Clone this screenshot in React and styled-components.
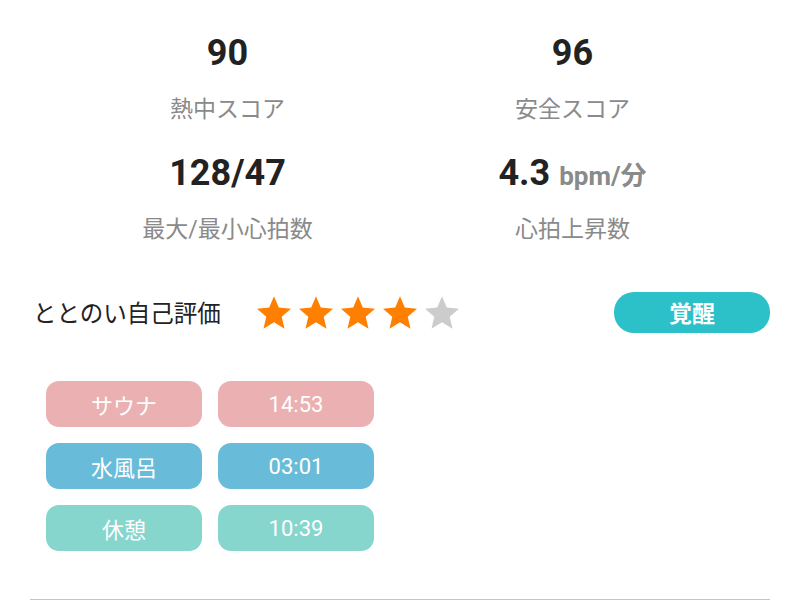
import React from 'react';
import styled, { createGlobalStyle } from 'styled-components';

const GlobalStyle = createGlobalStyle`
  body {
    margin: 0;
    background: #fff;
    font-family: Roboto, "Noto Sans CJK JP", sans-serif;
  }
`;

const Page = styled.div`
  padding: 33px 30px 0;
`;

const StatsGrid = styled.div`
  display: grid;
  grid-template-columns: 1fr 1fr;
  padding: 0 25px;
  row-gap: 27px;
`;

const Stat = styled.div`
  display: flex;
  flex-direction: column;
  align-items: center;
`;

const Value = styled.div`
  height: 40px;
  font-size: 36px;
  font-weight: 700;
  line-height: 40px;
  color: #222;
  white-space: nowrap;
`;

const Unit = styled.span`
  font-size: 26px;
  color: #8a8a8a;
  margin-left: 9px;
`;

const Label = styled.div`
  height: 32px;
  margin-top: 21px;
  font-size: 23px;
  line-height: 32px;
  color: #8a8a8a;
`;

const RatingRow = styled.div`
  display: flex;
  align-items: center;
  height: 42px;
  margin-top: 45px;
  padding-left: 3px;
`;

const RatingText = styled.div`
  font-size: 23.5px;
  color: #222;
`;

const Stars = styled.div`
  display: flex;
  gap: 8px;
  margin-left: 36px;
`;

const Badge = styled.div`
  margin-left: auto;
  width: 156px;
  height: 41px;
  border-radius: 20px;
  background: #2cc1c8;
  color: #fff;
  font-size: 23px;
  font-weight: 700;
  display: flex;
  align-items: center;
  justify-content: center;
`;

const ChipGrid = styled.div`
  display: grid;
  grid-template-columns: 156px 156px;
  column-gap: 16px;
  row-gap: 16px;
  margin: 48px 0 0 16px;
`;

const Chip = styled.div`
  height: 46px;
  border-radius: 13px;
  background: ${p => p.$bg};
  color: #fff;
  font-size: 22px;
  display: flex;
  align-items: center;
  justify-content: center;
`;

const Divider = styled.hr`
  margin: 48px 0 0;
  border: 0;
  border-top: 1px solid #c4c4c4;
`;

const Star = ({ on }) => (
  <svg width="34" height="33" viewBox="2 2 20 19">
    <path
      d="M12 17.27L18.18 21l-1.64-7.03L22 9.24l-7.19-.61L12 2 9.19 8.63 2 9.24l5.46 4.73L5.82 21z"
      fill={on ? '#ff7f00' : '#cccccc'}
    />
  </svg>
);

const phases = [
  { name: 'サウナ', time: '14:53', color: '#ebb0b1' },
  { name: '水風呂', time: '03:01', color: '#69bcd9' },
  { name: '休憩', time: '10:39', color: '#86d6cd' },
];

export default function App() {
  const rating = 4;
  return (
    <Page>
      <GlobalStyle />
      <StatsGrid>
        <Stat>
          <Value>90</Value>
          <Label>熱中スコア</Label>
        </Stat>
        <Stat>
          <Value>96</Value>
          <Label>安全スコア</Label>
        </Stat>
        <Stat>
          <Value>128/47</Value>
          <Label>最大/最小心拍数</Label>
        </Stat>
        <Stat>
          <Value>4.3<Unit>bpm/分</Unit></Value>
          <Label>心拍上昇数</Label>
        </Stat>
      </StatsGrid>

      <RatingRow>
        <RatingText>ととのい自己評価</RatingText>
        <Stars>
          {[1, 2, 3, 4, 5].map(i => <Star key={i} on={i <= rating} />)}
        </Stars>
        <Badge>覚醒</Badge>
      </RatingRow>

      <ChipGrid>
        {phases.map(p => (
          <React.Fragment key={p.name}>
            <Chip $bg={p.color}>{p.name}</Chip>
            <Chip $bg={p.color}>{p.time}</Chip>
          </React.Fragment>
        ))}
      </ChipGrid>

      <Divider />
    </Page>
  );
}
